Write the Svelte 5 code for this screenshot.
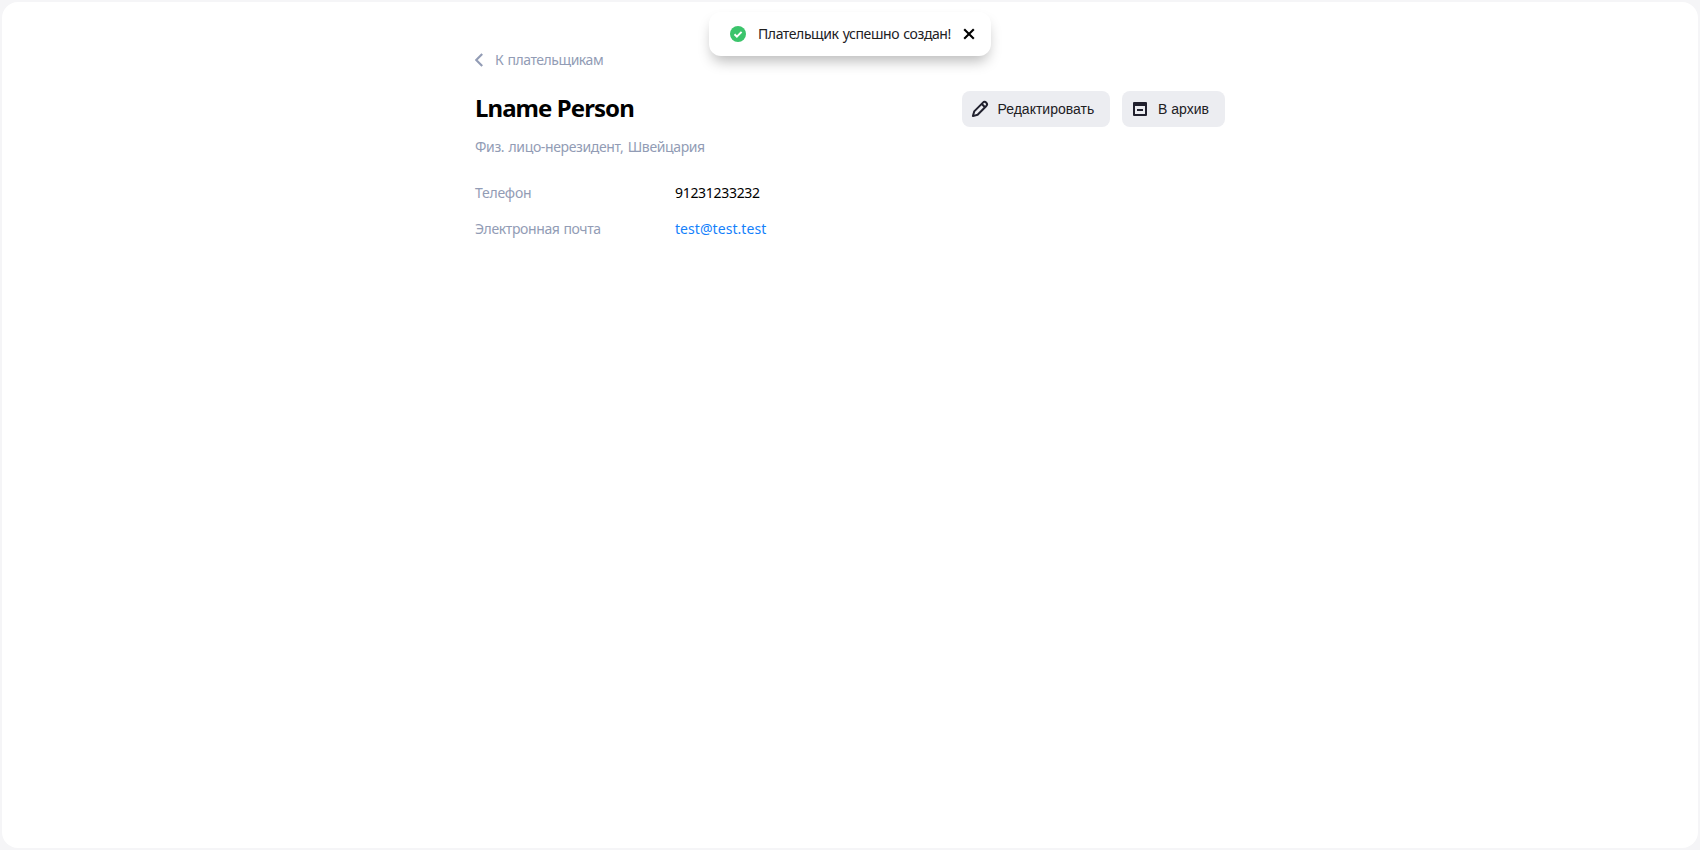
<script>
  const details = [
    { label: 'Телефон', value: '91231233232', kind: 'phone' },
    { label: 'Электронная почта', value: 'test@test.test', kind: 'mail' },
  ];
</script>

<div class="page">
  <main class="card">
    <div class="content">
      <a class="back" href="#payers">
        <svg width="9" height="14" viewBox="0 0 9 14"><path d="M7.2 1 1.2 7l6 6" fill="none" stroke="currentColor" stroke-width="2.2" /></svg>
        <span>К плательщикам</span>
      </a>
      <header class="head">
        <h1>Lname Person</h1>
        <div class="actions">
          <button class="edit">
            <svg width="18" height="18" viewBox="0 0 18 18" fill="none" stroke="#21212e" stroke-width="2" stroke-linejoin="round">
              <path d="M1.9 16.1 3.2 11.4 11.7 2.9C13 1.6 14.1 1.5 15.3 2.7C16.5 3.9 16.4 5 15.1 6.3L6.6 14.8Z" />
              <path d="m10.8 4 3.2 3.2" />
            </svg>
            <span>Редактировать</span>
          </button>
          <button class="archive">
            <svg width="14" height="14" viewBox="0 0 14 14"><path fill="#21212e" fill-rule="evenodd" d="M1 0h12a1 1 0 0 1 1 1v12a1 1 0 0 1-1 1H1a1 1 0 0 1-1-1V1a1 1 0 0 1 1-1Zm1 4v8h10V4ZM4 7h6v2H4Z" /></svg>
            <span>В архив</span>
          </button>
        </div>
      </header>
      <p class="type">Физ. лицо-нерезидент, Швейцария</p>
      <dl>
        {#each details as item}
          <div class="row">
            <dt class={item.kind}>{item.label}</dt>
            <dd class={item.kind}>{item.value}</dd>
          </div>
        {/each}
      </dl>
    </div>
  </main>
  <div class="toast">
    <svg width="16" height="16" viewBox="0 0 16 16"><circle cx="8" cy="8" r="8" fill="#3bc46b" /><path d="m4.5 8.2 2.4 2.4 4.7-4.7" fill="none" stroke="#fff" stroke-width="2" /></svg>
    <span>Плательщик успешно создан!</span>
    <svg class="close" width="12" height="12" viewBox="0 0 12 12"><path d="m1.2 1.2 9.6 9.6m0-9.6-9.6 9.6" stroke="#000" stroke-width="2.1" /></svg>
  </div>
</div>

<style>
  :global(body) { background: #f5f5f7; }
  .page {
    position: relative;
    box-sizing: border-box;
    height: 850px;
    padding: 2px;
    background: #f5f5f7;
    font: 14px/20px "Noto Sans", sans-serif;
    overflow: hidden;
  }
  .card {
    box-sizing: border-box;
    height: 846px;
    padding-top: 48px;
    border-radius: 16px;
    background: #fff;
  }
  .content { width: 750px; margin: 0 auto; }
  .back {
    display: flex;
    align-items: center;
    gap: 11px;
    height: 20px;
    color: #929cb5;
    text-decoration: none;
  }
  .back span { letter-spacing: -0.46px; word-spacing: 1px; }
  .head {
    display: flex;
    align-items: center;
    justify-content: space-between;
    height: 36px;
    margin-top: 21px;
  }
  h1 { margin: 0; padding-bottom: 2px; font-size: 24px; line-height: 34px; font-weight: 700; letter-spacing: -0.93px; }
  .actions { display: flex; gap: 12px; }
  button {
    display: flex;
    align-items: center;
    box-sizing: border-box;
    height: 36px;
    padding: 0;
    border: 0;
    border-radius: 8px;
    background: #ecedf1;
    color: #21201f;
    font: 14px/20px "Liberation Sans", sans-serif;
    white-space: nowrap;
  }
  .edit { width: 148px; padding-left: 9px; gap: 8.5px; }
  .archive { width: 103px; padding-left: 11px; gap: 11px; }
  .type { margin: 10px 0 0; color: #929cb5; white-space: nowrap; letter-spacing: -0.37px; word-spacing: 1px; }
  dl { display: grid; gap: 16px; margin: 26px 0 0; }
  .row { display: grid; grid-template-columns: 200px 1fr; height: 20px; }
  dt { color: #929cb5; letter-spacing: -0.38px; word-spacing: 0.7px; }
  dt.phone { letter-spacing: -0.25px; }
  dd { margin: 0; color: #000; letter-spacing: -0.3px; }
  dd.mail { color: #1481fb; letter-spacing: 0.06px; }
  .toast {
    position: absolute;
    top: 12px;
    left: 709px;
    display: flex;
    align-items: center;
    box-sizing: border-box;
    width: 282px;
    height: 44px;
    padding-left: 21px;
    border-radius: 12px;
    background: #fff;
    box-shadow: 0 8px 14px -3px rgba(0, 0, 0, 0.28);
    color: #21201f;
    white-space: nowrap;
  }
  .toast span { width: 193px; margin-left: 12px; letter-spacing: -0.42px; word-spacing: 1px; }
  .close { margin-left: 12px; }
</style>
